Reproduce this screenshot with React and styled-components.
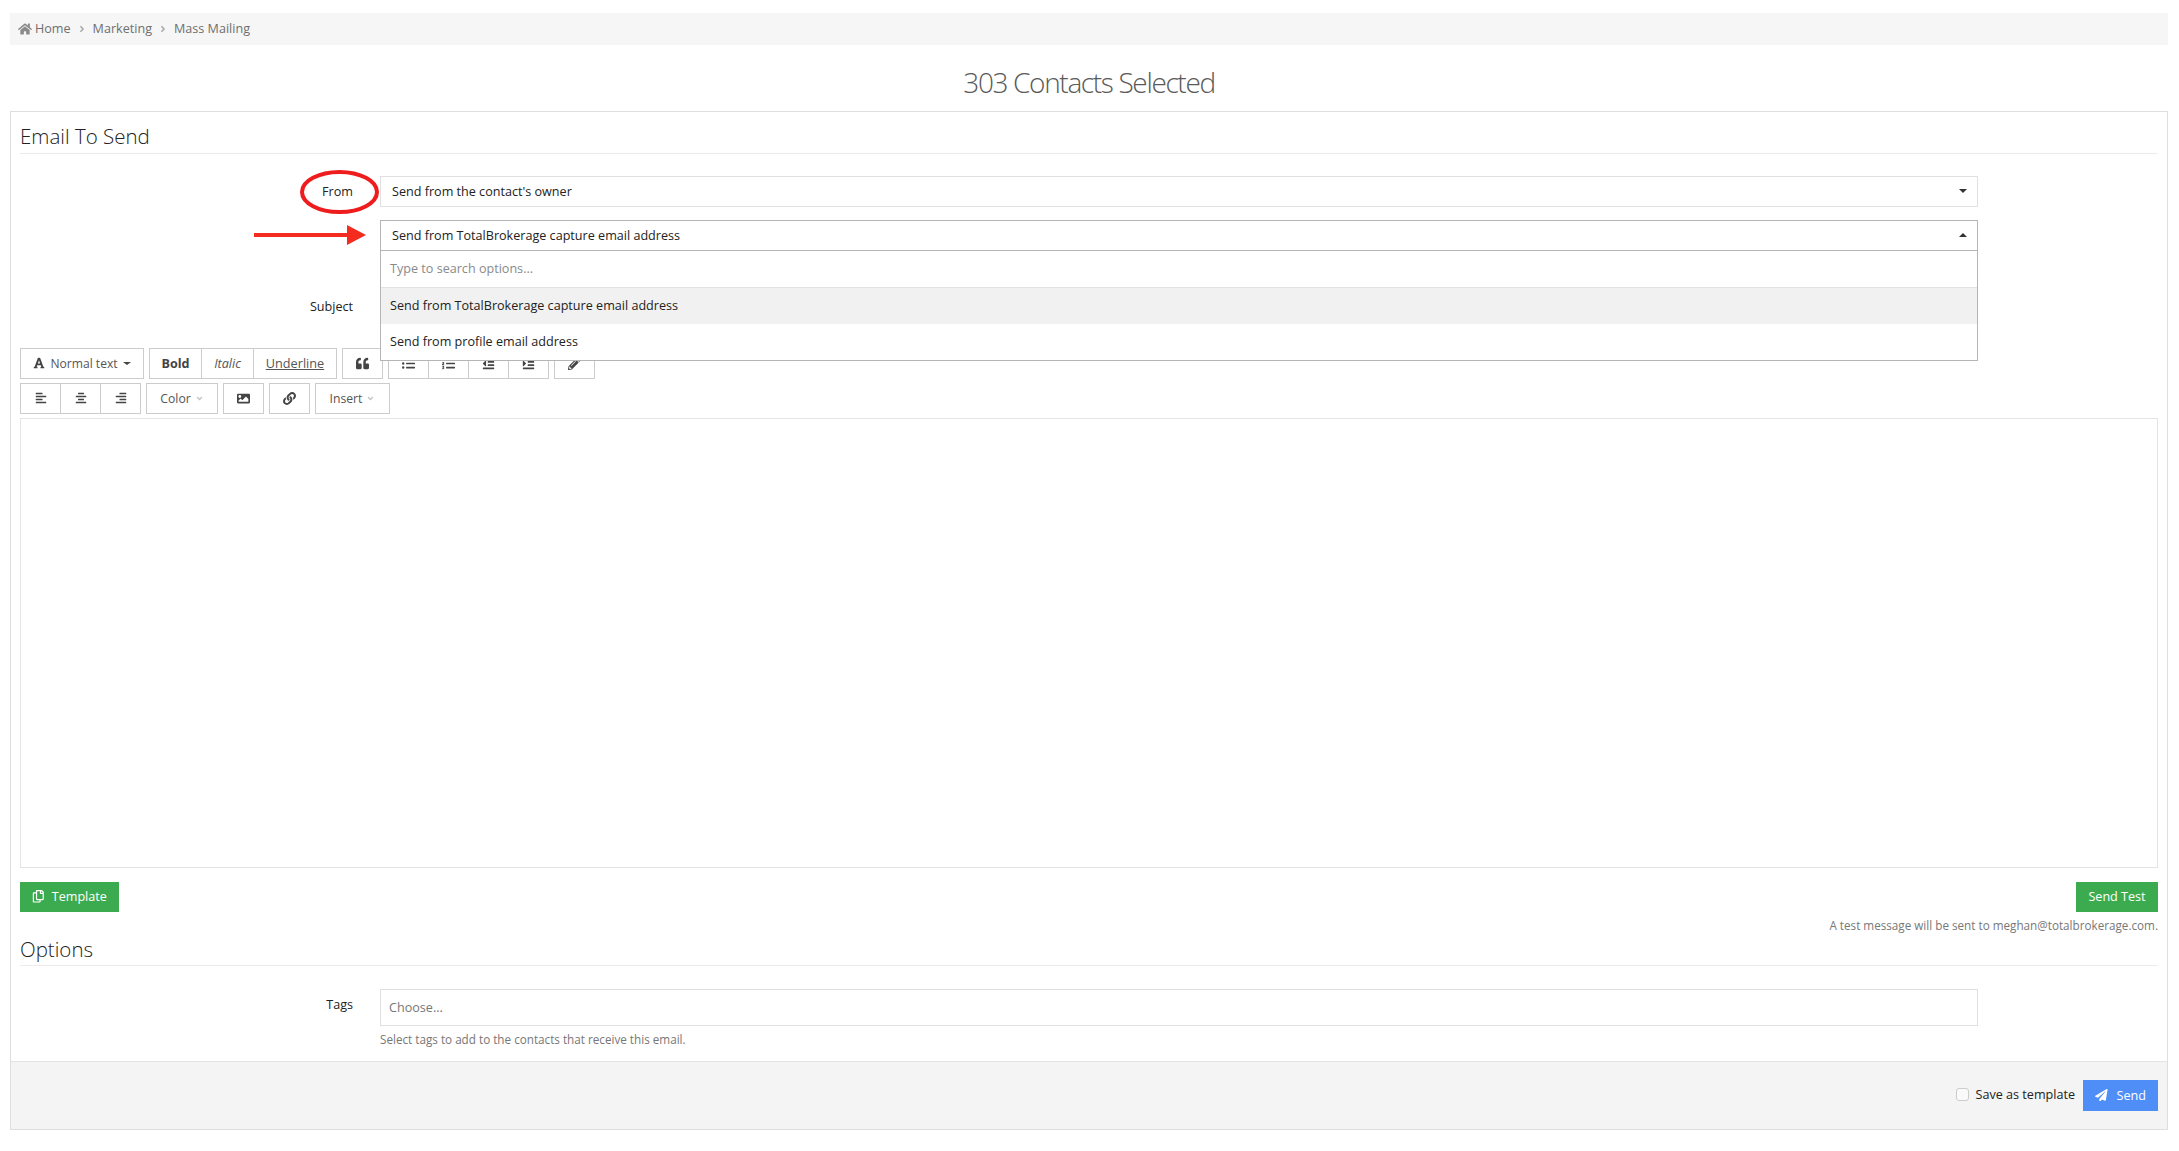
import React from 'react'
import styled, { createGlobalStyle } from 'styled-components'
import {
  FaHome, FaAngleRight, FaAngleDown, FaFont, FaQuoteLeft, FaListUl, FaListOl, FaOutdent, FaIndent,
  FaPencilAlt, FaAlignLeft, FaAlignCenter, FaAlignRight, FaImage, FaLink, FaRegCopy, FaPaperPlane
} from 'react-icons/fa'

const GlobalStyle = createGlobalStyle`
  * { box-sizing: border-box; }
  body {
    margin: 0;
    background: #fff;
    color: #222;
    font-family: "Open Sans", "Liberation Sans", sans-serif;
    font-size: 12.6px;
  }
`

const Page = styled.div`
  padding: 13px 11px 21px 10px;
`

const Breadcrumb = styled.nav`
  display: flex;
  align-items: center;
  height: 32px;
  padding: 0 0 1px 8px;
  background: #f6f6f6;
  color: #6f6f6f;
  font-size: 12.6px;
`

const Crumb = styled.span`
  display: inline-flex;
  align-items: center;
  gap: 3px;
  svg { font-size: 14px; color: #8a8a8a; }
`

const CrumbSep = styled(FaAngleRight)`
  margin: 0 6px;
  font-size: 10px;
  color: #aaa;
`

const Title = styled.h1`
  margin: 0;
  height: 66px;
  padding-top: 18px;
  text-align: center;
  font-size: 28px;
  line-height: 38px;
  font-weight: 300;
  letter-spacing: -1.35px;
  color: #5a5a5a;
`

const Panel = styled.section`
  border: 1px solid #dedede;
`

const PanelBody = styled.div`
  padding: 0 9px 14px;
`

const SectionTitle = styled.h2`
  margin: ${p => p.$top}px 0 0;
  height: 30px;
  border-bottom: 1px solid #ececec;
  font-size: 20.5px;
  line-height: ${p => p.$line}px;
  font-weight: 300;
  color: #222;
`

const Row = styled.div`
  position: relative;
  display: flex;
  margin-top: ${p => p.$top}px;
`

const Label = styled.label`
  flex: none;
  width: 333px;
  margin-right: 27px;
  text-align: right;
  line-height: 31px;
  color: #222;
`

const Control = styled.div`
  position: relative;
  width: 1598px;
`

const Select = styled.div`
  display: flex;
  align-items: center;
  justify-content: space-between;
  height: 31px;
  padding: 0 10px 1px 11px;
  background: #fff;
  border: 1px solid ${p => (p.$open ? '#b5b5b5' : '#e0e0e0')};
  color: #222;
`

const Caret = styled.i`
  width: 0;
  height: 0;
  border-left: 4.5px solid transparent;
  border-right: 4.5px solid transparent;
  ${p => (p.$up ? 'border-bottom: 4px solid #333;' : 'border-top: 4px solid #333;')}
`

const Dropdown = styled.div`
  position: absolute;
  z-index: 5;
  top: 31px;
  left: 0;
  right: 0;
  height: 110px;
  background: #fff;
  border: 1px solid #b5b5b5;
  border-top: 0;
`

const SearchOption = styled.div`
  height: 37px;
  padding-left: 9px;
  line-height: 35px;
  border-bottom: 1px solid #e2e2e2;
  color: #8a8a8a;
`

const Option = styled.div`
  height: 36px;
  padding-left: 9px;
  line-height: 35px;
  background: ${p => (p.$active ? '#f1f1f1' : '#fff')};
  color: #222;
`

const TextInput = styled.div`
  height: ${p => p.$h || 30}px;
  padding-left: 8px;
  border: 1px solid #e0e0e0;
  line-height: ${p => (p.$h || 30) - 2}px;
  color: #777;
`

const Annotation = styled.svg`
  position: absolute;
  z-index: 6;
  left: ${p => p.$left}px;
  top: ${p => p.$y}px;
`

const ToolRow = styled.div`
  display: flex;
  gap: 5px;
  margin-top: ${p => p.$top}px;
`

const Group = styled.div`
  display: flex;
`

const ToolBtn = styled.button`
  display: inline-flex;
  align-items: center;
  justify-content: center;
  gap: ${p => p.$gap || 4}px;
  width: ${p => p.$w || 41}px;
  height: 31px;
  margin-left: -1px;
  padding: 0 0 1px;
  background: #fff;
  border: 1px solid #ccc;
  border-radius: 0;
  font: inherit;
  font-size: ${p => p.$fs || 12.6}px;
  color: #555;
  &:first-child { margin-left: 0; }
  svg { color: #444; font-size: ${p => p.$icon || 13}px; }
`

const BoldText = styled.span`
  font-weight: 700;
  color: #444;
`

const ItalicText = styled.span`
  font-style: italic;
`

const UnderText = styled.span`
  text-decoration: underline;
`

const SmallCaret = styled.i`
  width: 0;
  height: 0;
  border-left: 4px solid transparent;
  border-right: 4px solid transparent;
  border-top: 3.5px solid #444;
`

const Chevron = styled(FaAngleDown)`
  && { font-size: 9px; color: #c4c4c4; }
`

const Editor = styled.div`
  height: 450px;
  margin-top: 4px;
  background: #fff;
  border: 1px solid #e4e4e4;
`

const Actions = styled.div`
  display: flex;
  justify-content: space-between;
  margin-top: 14px;
`

const GreenBtn = styled.button`
  display: inline-flex;
  align-items: center;
  justify-content: center;
  gap: 7px;
  width: ${p => p.$w}px;
  height: 30px;
  padding: 0 0 1px;
  background: #3cab4f;
  border: 0;
  font: inherit;
  font-size: 12.6px;
  color: #fff;
`

const Hint = styled.div`
  margin-top: 6px;
  text-align: right;
  font-size: 11.7px;
  line-height: 15px;
  color: #777;
`

const HelpText = styled.div`
  margin-top: 6px;
  font-size: 11.7px;
  line-height: 15px;
  color: #777;
`

const Footer = styled.footer`
  display: flex;
  align-items: center;
  justify-content: flex-end;
  gap: 8px;
  padding: 18px 9px;
  background: #f4f4f4;
  border-top: 1px solid #e4e4e4;
`

const CheckLabel = styled.label`
  display: inline-flex;
  align-items: center;
  gap: 7px;
  margin-bottom: 3px;
  color: #222;
`

const CheckBox = styled.span`
  width: 13px;
  height: 13px;
  background: #fafafa;
  border: 1px solid #ccc;
  border-radius: 3px;
`

const SendBtn = styled.button`
  display: inline-flex;
  align-items: center;
  justify-content: center;
  gap: 9px;
  width: 75px;
  height: 31px;
  padding: 0 0 1px;
  background: #4f8ef7;
  border: 0;
  font: inherit;
  font-size: 12.6px;
  color: #fff;
`

export default function App() {
  return (
    <Page>
      <GlobalStyle />
      <Breadcrumb>
        <Crumb><FaHome />Home</Crumb>
        <CrumbSep />
        <Crumb>Marketing</Crumb>
        <CrumbSep />
        <Crumb>Mass Mailing</Crumb>
      </Breadcrumb>
      <Title>303 Contacts Selected</Title>
      <Panel>
        <PanelBody>
          <SectionTitle $top={12} $line={24}>Email To Send</SectionTitle>

          <Row $top={22}>
            <Annotation $left={280} $y={-6} width="80" height="44" viewBox="0 0 80 44">
              <ellipse cx="39.500" cy="22" rx="37.500" ry="20" fill="none" stroke="#ee1c1c" strokeWidth="4" />
            </Annotation>
            <Label>From</Label>
            <Control>
              <Select>Send from the contact's owner<Caret /></Select>
            </Control>
          </Row>

          <Row $top={13}>
            <Annotation $left={234} $y={5} width="112" height="20" viewBox="0 0 112 20">
              <path d="M0 8h93V0l19 10-19 10v-8H0z" fill="#f42c20" />
            </Annotation>
            <Label />
            <Control>
              <Select $open>Send from TotalBrokerage capture email address<Caret $up /></Select>
              <Dropdown>
                <SearchOption>Type to search options...</SearchOption>
                <Option $active>Send from TotalBrokerage capture email address</Option>
                <Option>Send from profile email address</Option>
              </Dropdown>
            </Control>
          </Row>

          <Row $top={40}>
            <Label>Subject</Label>
            <Control><TextInput /></Control>
          </Row>

          <ToolRow $top={26}>
            <Group>
              <ToolBtn $w={124} $gap={5} $icon={12} $fs={12.1}><FaFont />Normal text<SmallCaret /></ToolBtn>
            </Group>
            <Group>
              <ToolBtn $w={53}><BoldText>Bold</BoldText></ToolBtn>
              <ToolBtn $w={53}><ItalicText>Italic</ItalicText></ToolBtn>
              <ToolBtn $w={84} $fs={12.7}><UnderText>Underline</UnderText></ToolBtn>
            </Group>
            <Group><ToolBtn><FaQuoteLeft /></ToolBtn></Group>
            <Group>
              <ToolBtn><FaListUl /></ToolBtn>
              <ToolBtn><FaListOl /></ToolBtn>
              <ToolBtn><FaOutdent /></ToolBtn>
              <ToolBtn><FaIndent /></ToolBtn>
            </Group>
            <Group><ToolBtn><FaPencilAlt /></ToolBtn></Group>
          </ToolRow>

          <ToolRow $top={4}>
            <Group>
              <ToolBtn $icon={12}><FaAlignLeft /></ToolBtn>
              <ToolBtn $icon={12}><FaAlignCenter /></ToolBtn>
              <ToolBtn $icon={12}><FaAlignRight /></ToolBtn>
            </Group>
            <Group><ToolBtn $w={72} $fs={12.2}>Color<Chevron /></ToolBtn></Group>
            <Group><ToolBtn><FaImage /></ToolBtn></Group>
            <Group><ToolBtn><FaLink /></ToolBtn></Group>
            <Group><ToolBtn $w={75} $fs={12.2}>Insert<Chevron /></ToolBtn></Group>
          </ToolRow>

          <Editor />

          <Actions>
            <GreenBtn $w={99}><FaRegCopy />Template</GreenBtn>
            <GreenBtn $w={82}>Send Test</GreenBtn>
          </Actions>
          <Hint>A test message will be sent to meghan@totalbrokerage.com.</Hint>

          <SectionTitle $top={3} $line={26}>Options</SectionTitle>

          <Row $top={23}>
            <Label>Tags</Label>
            <Control>
              <TextInput $h={37}>Choose...</TextInput>
              <HelpText>Select tags to add to the contacts that receive this email.</HelpText>
            </Control>
          </Row>
        </PanelBody>
        <Footer>
          <CheckLabel><CheckBox />Save as template</CheckLabel>
          <SendBtn><FaPaperPlane />Send</SendBtn>
        </Footer>
      </Panel>
    </Page>
  )
}
